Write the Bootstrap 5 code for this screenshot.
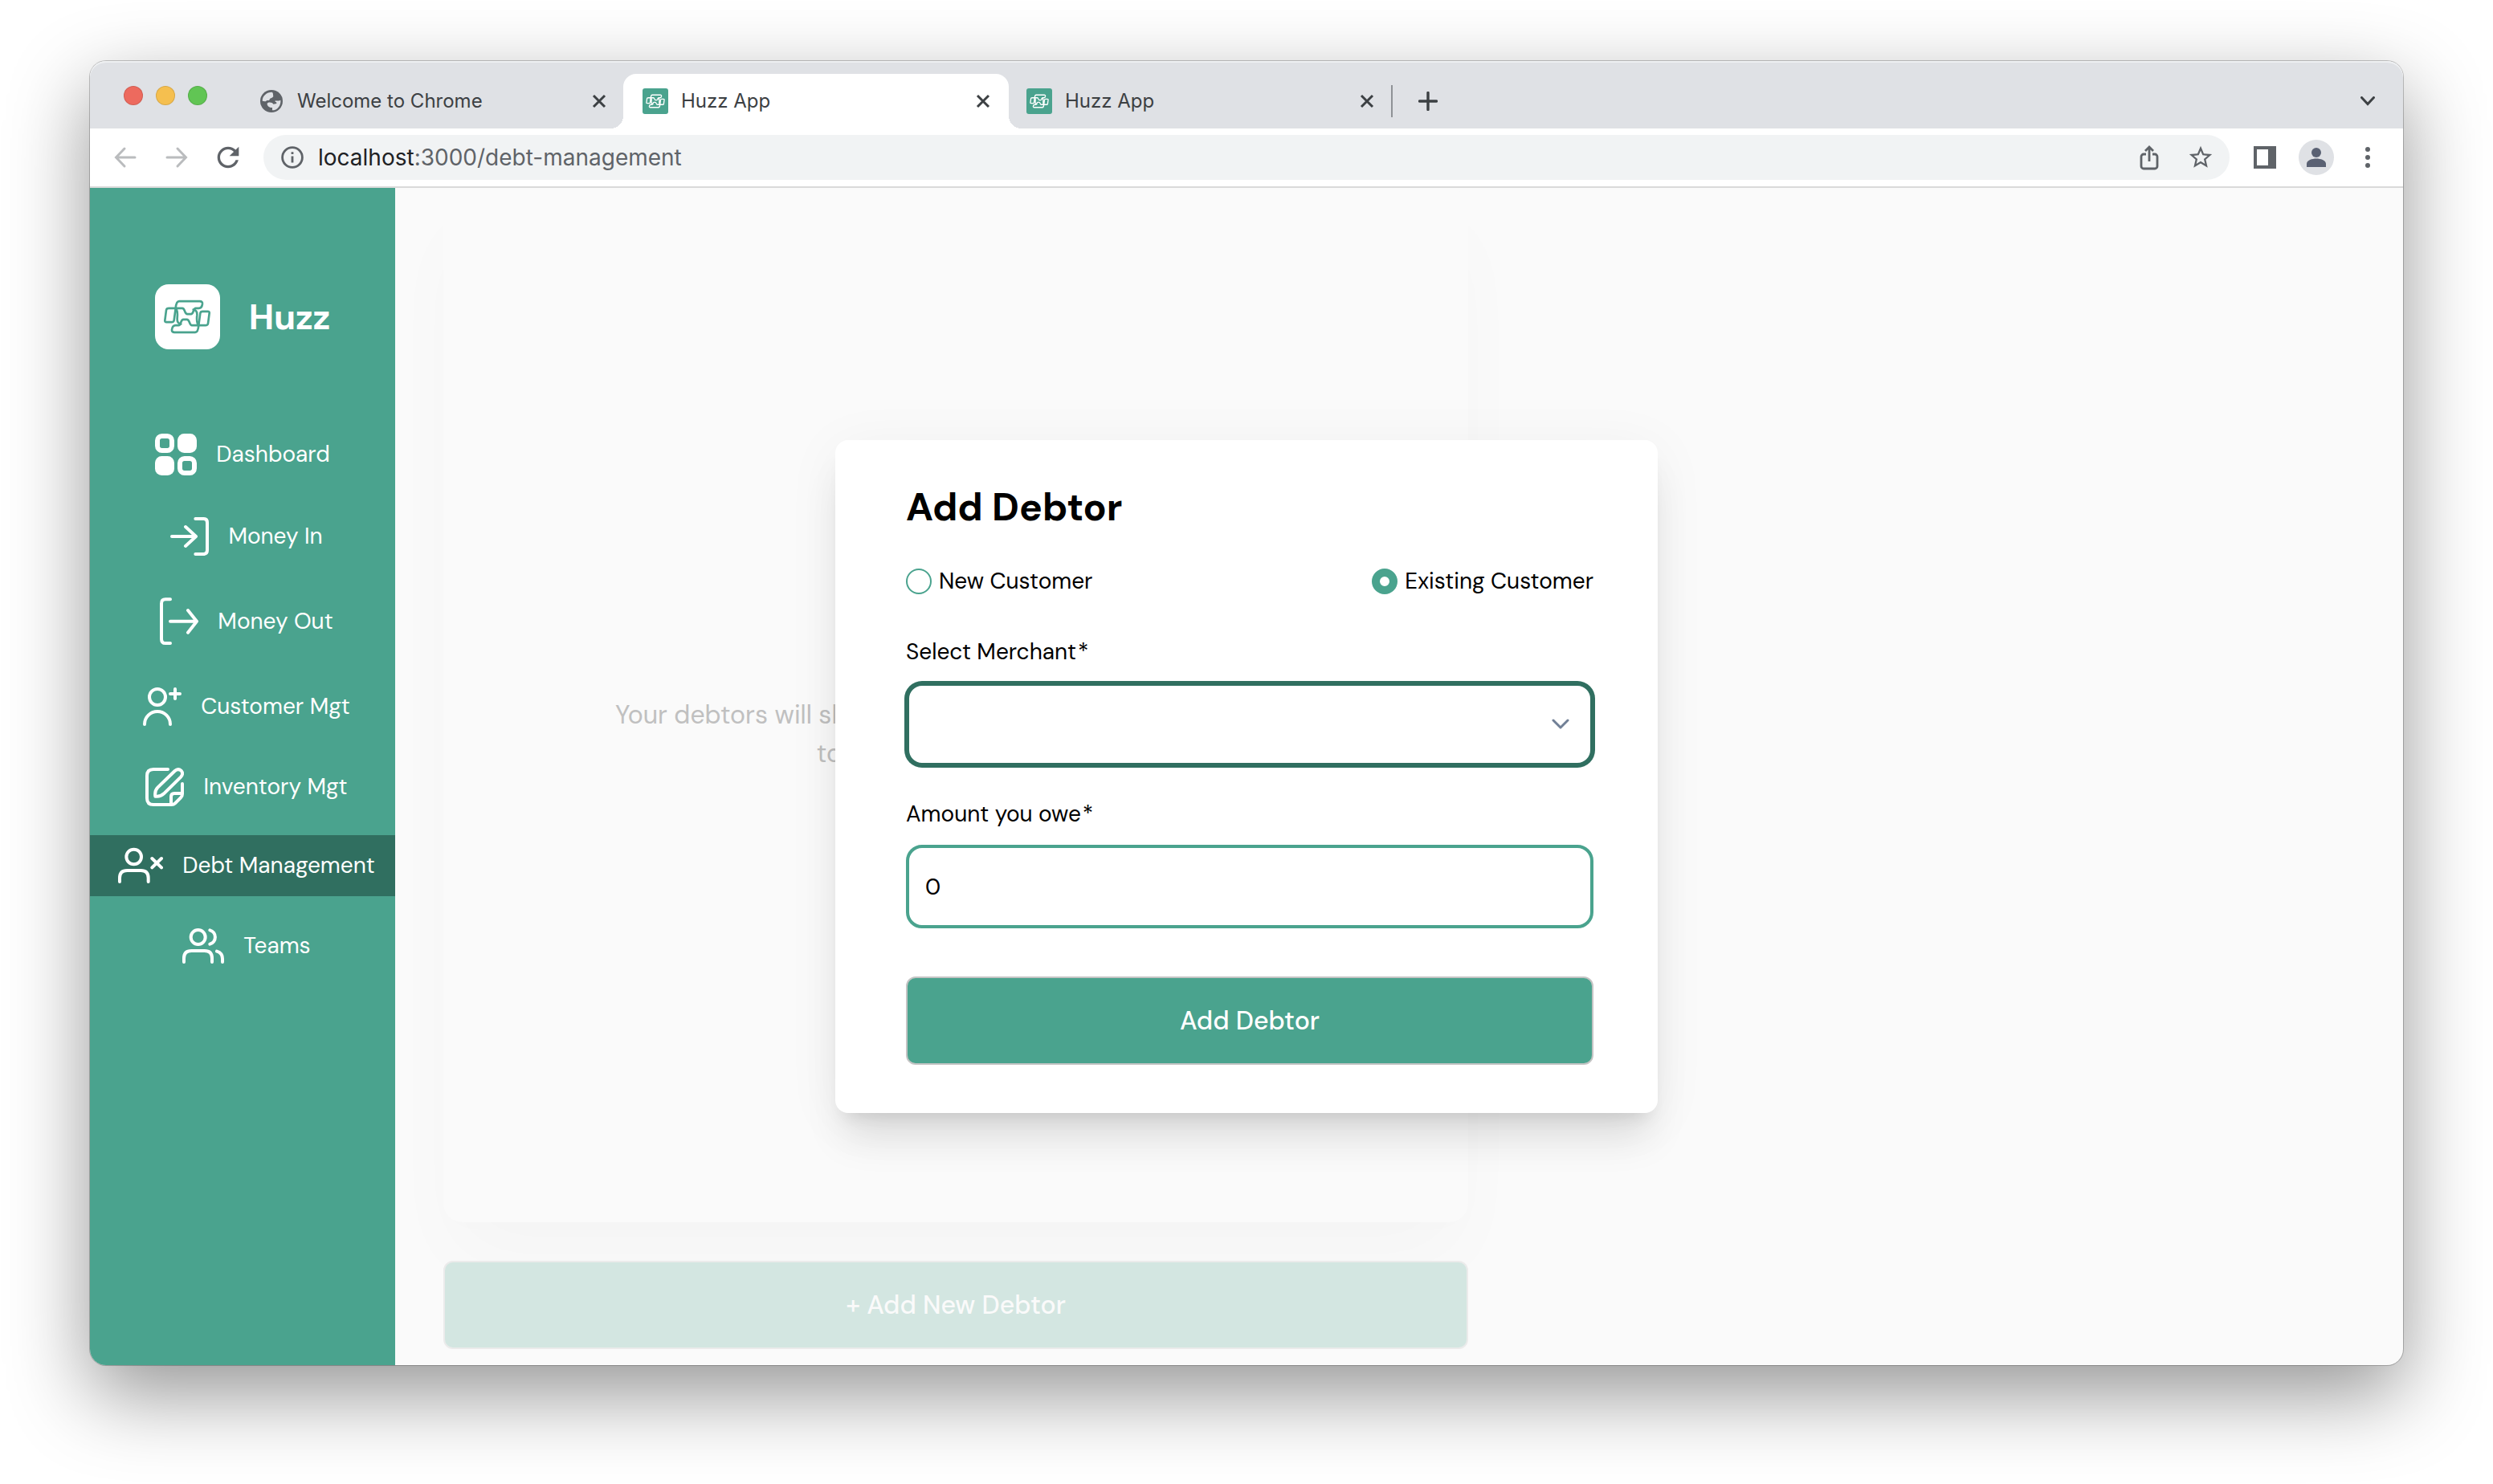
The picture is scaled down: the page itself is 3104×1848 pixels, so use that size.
<!DOCTYPE html>
<html lang="en">
<head>
<meta charset="utf-8">
<meta name="viewport" content="width=device-width, initial-scale=1">
<title>Huzz App</title>
<link href="https://cdn.jsdelivr.net/npm/bootstrap@5.3.0/dist/css/bootstrap.min.css" rel="stylesheet">
<style>
  :root { --brand: #4aa38e; --brand-dark: #306f60; --chrome: #dfe1e5; --ink: #5f6368; }
  body { font-family: "DM Sans", Inter, sans-serif; font-size: 28px; line-height: 40px; color: #000; background: #fff; padding: 76px 112px 148px; }
  svg { display: block; flex: none; }
  button { font-family: inherit; }

  /* browser window */
  .browser { border-radius: 20px; background: #fafafa; box-shadow: 0 0 0 1px rgba(0,0,0,.22), 0 36px 100px rgba(0,0,0,.42); }
  .browser-ui { font-family: Inter, Roboto, sans-serif; }
  .icon-btn { border: 0; padding: 0; background: none; display: grid; place-items: center; color: var(--ink); flex: none; }
  .tab-strip { height: 84px; background: var(--chrome); padding: 0 35px 0 42px; box-shadow: inset 0 2px 0 #eef0f2; border-radius: 20px 20px 0 0; }
  .lights { gap: 16px; margin: 2px 40px 0 0; }
  .light { width: 24px; height: 24px; border-radius: 50%; border: 1px solid rgba(0,0,0,.12); }
  .light-r { background: #ed6a5e; } .light-y { background: #f5bf4f; } .light-g { background: #61c554; }
  .page-tab { width: 478px; height: 68px; padding: 0 21px 0 24px; font-size: 24px; line-height: 32px; color: #3c4043; gap: 16px; }
  .page-tab.current { background: #fff; border-radius: 16px 16px 0 0; position: relative; width: 480px; margin-right: -2px; padding-right: 23px; }
  .page-tab.current::before, .page-tab.current::after { content: ""; position: absolute; bottom: 0; width: 16px; height: 16px; }
  .page-tab.current::before { left: -16px; background: radial-gradient(circle at 0 0, transparent 16px, #fff 16px); }
  .page-tab.current::after { right: -16px; background: radial-gradient(circle at 100% 0, transparent 16px, #fff 16px); }
  .page-tab .icon-btn, .tab-strip > .icon-btn { color: #3c4043; }
  .favicon { width: 32px; height: 32px; border-radius: 3px; background: var(--brand); color: #fff; display: grid; place-items: center; }
  .tab-rule { width: 2px; height: 40px; background: #8f9296; margin-right: 32px; }
  .tool-bar { height: 74px; background: #fff; border-bottom: 2px solid #dadada; padding: 0 40px 0 28px; }
  .tool-bar .nav-btns { gap: 32px; }
  .address { height: 56px; border-radius: 28px; background: #f1f3f4; margin-left: 28px; padding: 0 19px 0 22px; color: #5f6368; }
  .address .host { color: #202124; }
  .address .share { margin-right: 31px; }
  .url-text { margin-left: 18px; }
  .tool-end { gap: 26px; padding-left: 28px; }
  .avatar { width: 44px; height: 44px; border-radius: 50%; background: var(--chrome); color: #5a6173; }
  .dots { margin-left: 12px; }

  /* application */
  .app { position: relative; overflow: hidden; border-radius: 0 0 20px 20px; }
  .side { width: 380px; background: var(--brand); padding-top: 120px; color: #fff; flex: none; }
  .brand-row { gap: 36px; margin-bottom: 93px; font-size: 44px; line-height: 56px; font-weight: 700; }
  .brand-tile { width: 81px; height: 81px; border-radius: 17px; background: #fff; color: var(--brand); display: grid; place-items: center; }
  .side-nav { gap: 24px; }
  .side-nav a { color: #fff; text-decoration: none; gap: 24px; padding: 12px 0; white-space: nowrap; }
  .side-nav a.current { background: var(--brand-dark); }
  .side-nav .inset-icon { margin-left: 10px; }
  .line-icon { fill: none; stroke: currentColor; stroke-width: 12; stroke-linecap: round; stroke-linejoin: round; }

  .page-area { padding: 0 0 20px 60px; }
  .page-col { width: 1276px; max-width: 100%; }
  .empty-card { padding-top: 72px; margin-bottom: 48px; border-radius: 24px; background: #fafafa; box-shadow: 0 50px 100px -10px rgba(0,0,0,.022), 0 10px 40px rgba(0,0,0,.006); color: #c0c0c0; font-size: 32px; line-height: 48px; }
  .big-btn { height: 110px; width: 100%; border: 2px solid #c4c4c4; border-radius: 12px; background: var(--brand); color: #fff; font-size: 32px; line-height: 40px; font-weight: 500; }
  .big-btn.dimmed { background: #d3e6e1; border-color: #ebebeb; color: #fafafa; }

  .dialog-layer { position: absolute; inset: 0; }
  .dialog-box { width: 1024px; padding: 54px 80px 60px 88px; border-radius: 16px; background: #fff; box-shadow: 0 40px 50px -10px rgba(0,0,0,.1), 0 16px 20px -12px rgba(0,0,0,.1), 0 10px 70px rgba(0,0,0,.05); }
  .dialog-box h1 { font-size: 48px; line-height: 60px; font-weight: 700; margin-bottom: 42px; }
  .choice-row { margin-bottom: 48px; }
  .choice { gap: 9px; }
  .choice .form-check-input { width: 32px; height: 32px; margin: 0; border: 2px solid var(--brand); background: #fff; }
  .choice .form-check-input:checked { border: 10px solid var(--brand); background: #fff; }
  .field-label { display: block; margin-bottom: 18px; }
  .field-label span { margin-left: 2px; }
  .dialog-box .form-control, .dialog-box .form-select { height: 104px; border: 4px solid var(--brand); border-radius: 20px; padding: 0 20px; font-size: 28px; line-height: 40px; color: #000; background-color: #fff; }
  .dialog-box .form-select { margin-bottom: 40px; border-color: var(--brand-dark); box-shadow: 0 0 0 2px var(--brand-dark); background-image: url("data:image/svg+xml,%3Csvg xmlns='http://www.w3.org/2000/svg' viewBox='0 0 22 14'%3E%3Cpath d='M2 2l9 9 9-9' fill='none' stroke='%23718096' stroke-width='3' stroke-linecap='round' stroke-linejoin='round'/%3E%3C/svg%3E"); background-size: 22px 14px; background-position: right 26px center; }
  .dialog-box .form-control { margin-bottom: 60px; }
</style>
</head>
<body class="d-flex flex-column min-vh-100">

<svg width="0" height="0" class="position-absolute" aria-hidden="true">
  <symbol id="knot" viewBox="45 60 180 146">
    <g fill="none" stroke="currentColor" stroke-linecap="round" stroke-linejoin="round">
      <g id="knot-half">
        <path d="M92 102Q94 75 105 75H182Q193 75 192 85Q190 101 178 101H167C156 101 161 123 149 123H136C124 123 128 101 117 101H67Q58 101 57 108L52 146Q51 153 58 153H77Q85 153 86 146L92 102C99 107 100 120 98 140Q97 158 112 160"/>
      </g>
      <use href="#knot-half" transform="rotate(180 135 133)"/>
    </g>
  </symbol>
  <symbol id="cross" viewBox="0 0 18 18"><path d="M2 2l14 14M16 2l-14 14" fill="none" stroke="currentColor" stroke-width="3"/></symbol>
</svg>

<div class="browser flex-grow-1 d-flex flex-column">
  <header class="browser-ui">
    <div class="tab-strip d-flex align-items-end">
      <div class="d-flex align-self-stretch align-items-center lights">
        <span class="light light-r"></span><span class="light light-y"></span><span class="light light-g"></span>
      </div>
      <div class="page-tab d-flex align-items-center">
        <svg width="32" height="32" viewBox="66 60 96 96"><circle cx="114" cy="108" r="42" fill="#5f6368"/><path fill="#dfe1e5" d="M80 107C80 88 96 74 116 74C122 78 119 84 121 90C118 96 110 96 108 99C107 106 103 105 97 105C92 111 86 108 80 107ZM117 142V132C104 132 97 124 98 116C103 110 118 112 121 119L130 118C136 116 134 112 128 110V106C136 108 143 106 148 104C150 124 136 142 117 142Z"/></svg>
        <span class="flex-grow-1">Welcome to Chrome</span>
        <button class="icon-btn" aria-label="Close tab"><svg width="18" height="18"><use href="#cross"/></svg></button>
      </div>
      <div class="page-tab current d-flex align-items-center">
        <span class="favicon"><svg width="24" height="20" stroke-width="10"><use href="#knot"/></svg></span>
        <span class="flex-grow-1">Huzz App</span>
        <button class="icon-btn" aria-label="Close tab"><svg width="18" height="18"><use href="#cross"/></svg></button>
      </div>
      <div class="page-tab d-flex align-items-center">
        <span class="favicon"><svg width="24" height="20" stroke-width="10"><use href="#knot"/></svg></span>
        <span class="flex-grow-1">Huzz App</span>
        <button class="icon-btn" aria-label="Close tab"><svg width="18" height="18"><use href="#cross"/></svg></button>
      </div>
      <div class="d-flex align-items-center flex-grow-1 page-tab p-0 gap-0">
        <span class="tab-rule"></span>
        <button class="icon-btn" aria-label="New tab"><svg width="24" height="24" viewBox="0 0 24 24"><path d="M12 1.500v21M1.500 12h21" stroke="currentColor" stroke-width="3.400" stroke-linecap="round"/></svg></button>
        <button class="icon-btn ms-auto" aria-label="Search tabs"><svg width="18" height="12" viewBox="0 0 18 12"><path d="M1.500 1.500L9 9.500l7.500-8" fill="none" stroke="currentColor" stroke-width="3" stroke-linecap="round"/></svg></button>
      </div>
    </div>
    <div class="tool-bar d-flex align-items-center">
      <div class="nav-btns d-flex">
        <button class="icon-btn" aria-label="Back"><svg width="32" height="32" viewBox="0 0 32 32" fill="none" stroke="#babcbe" stroke-width="3" stroke-linecap="round"><path d="M28 16H5M15 5L4.500 16L15 27"/></svg></button>
        <button class="icon-btn" aria-label="Forward"><svg width="32" height="32" viewBox="0 0 32 32" fill="none" stroke="#babcbe" stroke-width="3" stroke-linecap="round"><path d="M4 16h23M17 5l10.500 11L17 27"/></svg></button>
        <button class="icon-btn" aria-label="Reload"><svg width="32" height="32" viewBox="2.400 2.400 19.200 19.200" fill="currentColor"><path d="M17.650 6.350C16.200 4.900 14.210 4 12 4c-4.420 0-7.990 3.580-7.990 8s3.570 8 7.990 8c3.730 0 6.840-2.550 7.730-6h-2.080c-.82 2.330-3.040 4-5.650 4-3.310 0-6-2.690-6-6s2.690-6 6-6c1.660 0 3.140.69 4.220 1.780L13 11h7V4l-2.350 2.350z"/></svg></button>
      </div>
      <div class="address d-flex align-items-center flex-grow-1">
        <svg width="28" height="28" viewBox="0 0 28 28"><circle cx="14" cy="14" r="12.400" fill="none" stroke="#5f6368" stroke-width="2.800"/><path d="M14 12.500v8M14 7.200v2.900" stroke="#5f6368" stroke-width="2.800"/></svg>
        <div class="url-text flex-grow-1" role="textbox" aria-label="Address" contenteditable="true" spellcheck="false"><span class="host">localhost</span>:3000/debt-management</div>
        <button class="icon-btn share" aria-label="Share"><svg width="32" height="32" viewBox="0 0 32 32" fill="none" stroke="currentColor" stroke-width="2.800"><path d="M12 12H9a3 3 0 0 0-3 3v12a3 3 0 0 0 3 3h14a3 3 0 0 0 3-3V15a3 3 0 0 0-3-3h-3M16 21V3.500M11 8l5-5 5 5"/></svg></button>
        <button class="icon-btn" aria-label="Bookmark"><svg width="34" height="34" viewBox="0 0 24 24" fill="currentColor"><path d="M22 9.240l-7.190-.62L12 2 9.190 8.630 2 9.240l5.460 4.730L5.820 21 12 17.270 18.180 21l-1.630-7.030L22 9.240zM12 15.400l-3.760 2.270 1-4.280-3.320-2.880 4.380-.38L12 6.100l1.710 4.040 4.380.38-3.320 2.880 1 4.280L12 15.400z"/></svg></button>
      </div>
      <div class="tool-end d-flex align-items-center">
        <button class="icon-btn" aria-label="Side panel"><svg width="32" height="28" viewBox="-2 0 32 28"><path d="M0 0h28v28H0zM4 4v20h14V4z" fill="currentColor" fill-rule="evenodd"/></svg></button>
        <button class="icon-btn avatar" aria-label="Profile"><svg width="24" height="26" viewBox="0 0 24 26" fill="currentColor"><circle cx="12" cy="7" r="6"/><path d="M0 25v-4c0-4.500 7-6.500 12-6.500s12 2 12 6.500v4z"/></svg></button>
        <button class="icon-btn dots" aria-label="Menu"><svg width="8" height="28" viewBox="0 0 8 28" fill="currentColor"><circle cx="4" cy="4" r="3"/><circle cx="4" cy="14" r="3"/><circle cx="4" cy="24" r="3"/></svg></button>
      </div>
    </div>
  </header>

  <div class="app d-flex flex-grow-1">
    <aside class="side d-flex flex-column">
      <div class="brand-row d-flex justify-content-center align-items-center">
        <span class="brand-tile"><svg width="60" height="49" stroke-width="8"><use href="#knot"/></svg></span>
        <span>Huzz</span>
      </div>
      <nav class="side-nav d-flex flex-column">
        <a href="#" class="d-flex justify-content-center align-items-center">
          <svg width="52" height="52" viewBox="0 0 156 156"><g fill="none" stroke="#fff" stroke-width="18"><rect x="9" y="9" width="54" height="54" rx="17"/><rect x="93" y="93" width="54" height="54" rx="17"/></g><g fill="#fff"><rect x="84" width="72" height="72" rx="25"/><rect y="84" width="72" height="72" rx="25"/></g></svg>
          Dashboard</a>
        <a href="#" class="d-flex justify-content-center align-items-center">
          <svg class="line-icon inset-icon" width="48" height="56" viewBox="336 960 144 168"><path d="M430 978H460Q474 978 474 992V1096Q474 1110 460 1110H430M342 1044H430M393 1008L432 1044L393 1080"/></svg>
          Money In</a>
        <a href="#" class="d-flex justify-content-center align-items-center">
          <svg class="line-icon inset-icon" width="48" height="60" viewBox="297 72 144 180"><path d="M336 79H318Q303 79 303 95V227Q303 243 318 243H336M336 161H435M402 120L435 161L402 203"/></svg>
          Money Out</a>
        <a href="#" class="d-flex justify-content-center align-items-center">
          <svg class="line-icon inset-icon" width="48" height="56" viewBox="234 396 144 168"><circle cx="288" cy="444" r="30"/><path d="M240 546A48 48 0 0 1 336 546M354 414V450M336 432H372"/></svg>
          Customer Mgt</a>
        <a href="#" class="d-flex justify-content-center align-items-center">
          <svg class="line-icon inset-icon" width="48" height="48" viewBox="246 708 144 144"><path d="M330 714H276Q252 714 252 738V822Q252 846 276 846H344Q352 846 357 841L378 820Q384 814 384 806V768M342 843V816Q342 804 354 804H382M283 815Q280 794 292 782L356 720Q368 709 380 719Q389 730 379 742L315 805Q301 818 283 815Z"/></svg>
          Inventory Mgt</a>
        <a href="#" class="d-flex justify-content-center align-items-center current" aria-current="page">
          <svg class="line-icon inset-icon" width="56" height="52" viewBox="141 996 168 156"><circle cx="200" cy="1041" r="28"/><path d="M147 1134V1120Q147 1092 175 1092H226Q254 1092 254 1120V1134M268 1047L303 1081M303 1047L268 1081"/></svg>
          Debt Management</a>
        <a href="#" class="d-flex justify-content-center align-items-center">
          <svg class="line-icon inset-icon" width="52" height="52" viewBox="381 1296 156 156"><circle cx="440" cy="1341" r="27"/><path d="M387 1434V1420Q387 1392 415 1392H464Q492 1392 492 1420V1434M484 1315A27 27 0 0 1 484 1367M510 1394Q531 1400 531 1422V1434"/></svg>
          Teams</a>
      </nav>
    </aside>

    <main class="page-area flex-grow-1 d-flex">
      <div class="page-col d-flex flex-column">
        <section class="empty-card flex-grow-1 d-flex align-items-center justify-content-center text-center">
          <p class="m-0">Your debtors will show here. Click the New Debtor button,<br>to add your first debtor</p>
        </section>
        <button class="big-btn dimmed">+ Add New Debtor</button>
      </div>
    </main>

    <div class="dialog-layer d-flex align-items-center justify-content-center">
      <form class="dialog-box" role="dialog" aria-labelledby="dialog-title">
        <h1 id="dialog-title">Add Debtor</h1>
        <div class="choice-row d-flex justify-content-between">
          <div class="choice d-flex align-items-center">
            <input class="form-check-input" type="radio" name="customer" id="new-customer">
            <label for="new-customer">New Customer</label>
          </div>
          <div class="choice d-flex align-items-center">
            <input class="form-check-input" type="radio" name="customer" id="existing-customer" checked>
            <label for="existing-customer">Existing Customer</label>
          </div>
        </div>
        <label class="field-label" for="merchant">Select Merchant<span>*</span></label>
        <select class="form-select" id="merchant"><option value=""></option></select>
        <label class="field-label" for="amount">Amount you owe<span>*</span></label>
        <input class="form-control" id="amount" type="text" inputmode="numeric" value="0">
        <button class="big-btn" type="button">Add Debtor</button>
      </form>
    </div>
  </div>
</div>
<script src="https://cdn.jsdelivr.net/npm/bootstrap@5.3.0/dist/js/bootstrap.bundle.min.js"></script>
</body>
</html>
